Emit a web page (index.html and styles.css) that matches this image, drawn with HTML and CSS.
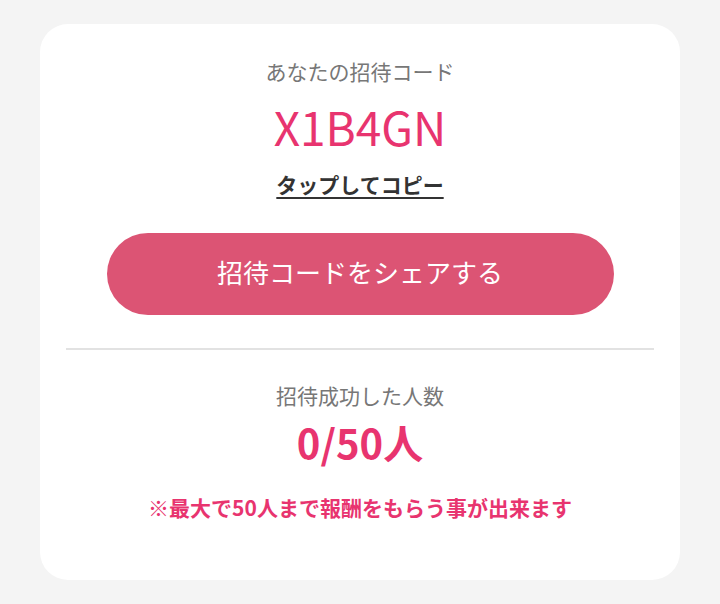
FILE: index.html
```html
<!DOCTYPE html>
<html lang="ja">
<head>
    <meta charset="UTF-8">
    <meta name="viewport" content="width=device-width, initial-scale=1.0">
    <title>招待コード</title>
    <link rel="stylesheet" href="styles.css">
</head>
<body>
    <div class="invite-card">
        <div class="invite-label">あなたの招待コード</div>
        <div class="invite-code">X1B4GN</div>
        <a class="copy-link" href="#">タップしてコピー</a>
        <button class="share-button" type="button">招待コードをシェアする</button>
        <hr class="divider">
        <div class="count-label">招待成功した人数</div>
        <div class="count-value">0/50人</div>
        <div class="note">※最大で50人まで報酬をもらう事が出来ます</div>
    </div>
</body>
</html>
```

FILE: styles.css
```css
body {
    margin: 0;
    padding: 24px 40px;
    background-color: #f4f4f4;
    font-family: "Noto Sans CJK JP", "Noto Sans", sans-serif;
}

.invite-card {
    width: 640px;
    height: 556px;
    box-sizing: border-box;
    padding-top: 33px;
    background-color: #ffffff;
    border-radius: 28px;
    display: flex;
    flex-direction: column;
    align-items: center;
    text-align: center;
}

.invite-label,
.count-label {
    color: #777777;
    font-size: 21px;
    line-height: 28px;
}

.invite-code {
    margin-top: 13px;
    color: #e8346f;
    font-size: 46px;
    line-height: 56px;
}

.copy-link {
    margin-top: 16px;
    color: #333333;
    font-size: 21px;
    font-weight: bold;
    line-height: 28px;
    text-decoration: underline;
    text-underline-offset: 4px;
}

.share-button {
    margin-top: 35px;
    width: 507px;
    height: 82px;
    padding: 0 0 5px;
    border: none;
    border-radius: 41px;
    background-color: #dc5474;
    color: #ffffff;
    font-family: inherit;
    font-size: 26px;
    cursor: pointer;
}

.divider {
    align-self: stretch;
    margin: 33px 26px 0;
    height: 2px;
    border: none;
    background-color: #e2e2e2;
}

.count-label {
    margin-top: 31px;
}

.count-value {
    margin-top: 11px;
    color: #e8346f;
    font-size: 40px;
    font-weight: bold;
    line-height: 44px;
}

.note {
    margin-top: 29px;
    color: #e8346f;
    font-size: 21px;
    font-weight: bold;
    line-height: 28px;
}
```
